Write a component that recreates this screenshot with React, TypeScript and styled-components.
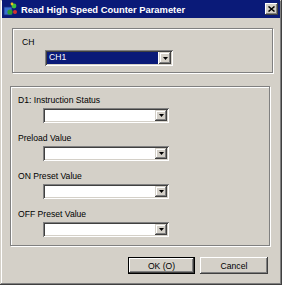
import React from 'react';
import styled, { createGlobalStyle } from 'styled-components';

const GlobalStyle = createGlobalStyle`
  html, body {
    margin: 0;
    padding: 0;
    background: #d4d0c8;
  }
  body {
    font-family: "Liberation Sans", Arial, sans-serif;
  }
`;

const Window = styled.div`
  width: 282px;
  height: 285px;
  box-sizing: border-box;
  padding: 0 2px 2px 2px;
  background: #d4d0c8;
  display: flex;
  flex-direction: column;
  box-shadow: inset -1px -1px 0 #404040, inset 1px 1px 0 #d4d0c8,
    inset -2px -2px 0 #808080, inset 2px 2px 0 #ffffff;
`;

const TitleBar = styled.div`
  height: 18px;
  background: #0a1a78;
  display: flex;
  align-items: center;
  padding: 0 2px 0 1px;
`;

const TitleText = styled.span`
  flex: 1;
  margin-left: 3px;
  color: #ffffff;
  font-weight: bold;
  font-size: 9.4px;
  white-space: nowrap;
`;

const CloseButton = styled.div`
  width: 13px;
  height: 12px;
  background: #d4d0c8;
  display: flex;
  align-items: center;
  justify-content: center;
  box-shadow: inset -1px -1px 0 #404040, inset 1px 1px 0 #ffffff,
    inset -2px -2px 0 #808080;
`;

interface GroupProps {
  $left: number;
  $top: number;
  $width: number;
  $height: number;
  $pad: number;
}

const Group = styled.div<GroupProps>`
  margin-left: ${(p) => p.$left}px;
  margin-top: ${(p) => p.$top}px;
  width: ${(p) => p.$width}px;
  height: ${(p) => p.$height}px;
  box-sizing: border-box;
  border: 1px solid #808080;
  box-shadow: inset 1px 1px 0 #ffffff, 1px 1px 0 #ffffff;
  display: flex;
  flex-direction: column;
  padding: 8px 0 0 ${(p) => p.$pad}px;
`;

const Label = styled.div`
  font-size: 8.6px;
  line-height: 10px;
  height: 10px;
  color: #000000;
  white-space: nowrap;
`;

const Field = styled.div<{ $indent: number }>`
  display: flex;
  flex-direction: column;
  gap: 3px;
  margin-bottom: 10px;

  & > :last-child {
    margin-left: ${(p) => p.$indent}px;
  }
`;

const ComboBox = styled.div<{ $width: number; $height: number }>`
  width: ${(p) => p.$width}px;
  height: ${(p) => p.$height}px;
  box-sizing: border-box;
  background: #ffffff;
  padding: 2px;
  display: flex;
  box-shadow: inset 1px 1px 0 #808080, inset -1px -1px 0 #ffffff,
    inset 2px 2px 0 #404040, inset -2px -2px 0 #d4d0c8;
`;

const ComboValue = styled.div<{ $selected: boolean }>`
  flex: 1;
  font-size: 8.6px;
  line-height: 11px;
  padding-left: 2px;
  margin-right: 1px;
  color: ${(p) => (p.$selected ? '#ffffff' : '#000000')};
  background: ${(p) => (p.$selected ? '#0a1a78' : 'transparent')};
`;

const DropButton = styled.div`
  width: 12px;
  background: #d4d0c8;
  display: flex;
  align-items: center;
  justify-content: center;
  box-shadow: inset -1px -1px 0 #404040, inset 1px 1px 0 #d4d0c8,
    inset -2px -2px 0 #808080, inset 2px 2px 0 #ffffff;
`;

const ButtonRow = styled.div`
  display: flex;
  gap: 5px;
  margin-top: 11px;
  margin-left: 126px;
`;

const PushButton = styled.div<{ $default?: boolean }>`
  width: ${(p) => (p.$default ? 67 : 68)}px;
  height: 17px;
  box-sizing: border-box;
  display: flex;
  align-items: center;
  justify-content: center;
  font-size: 8.6px;
  background: #d4d0c8;
  border: ${(p) => (p.$default ? '1px solid #000000' : 'none')};
  box-shadow: inset -1px -1px 0 #404040, inset 1px 1px 0 #ffffff,
    inset -2px -2px 0 #808080;
`;

const Arrow = () => (
  <svg width="5" height="3" viewBox="0 0 5 3">
    <path d="M0 0h5L2.5 3z" fill="#000" />
  </svg>
);

const AppIcon = () => (
  <svg width="15" height="15" viewBox="0 0 15 15">
    <rect x="1" y="5" width="8" height="8" fill="#3a6fd0" stroke="#1b2f7a" strokeWidth="0.8" />
    <circle cx="11" cy="4" r="2.4" fill="#3cbf3c" />
    <circle cx="7" cy="10" r="2.6" fill="#2e9e2e" />
    <circle cx="12" cy="10" r="2" fill="#d83030" />
    <circle cx="9" cy="2" r="1.4" fill="#e8c020" />
  </svg>
);

const Combo: React.FC<{ width: number; height: number; value?: string; selected?: boolean }> = ({
  width,
  height,
  value = '',
  selected = false,
}) => (
  <ComboBox $width={width} $height={height}>
    <ComboValue $selected={selected}>{value}</ComboValue>
    <DropButton>
      <Arrow />
    </DropButton>
  </ComboBox>
);

const fields = ['D1: Instruction Status', 'Preload Value', 'ON Preset Value', 'OFF Preset Value'];

export default function App() {
  return (
    <>
      <GlobalStyle />
      <Window>
        <TitleBar>
          <AppIcon />
          <TitleText>Read High Speed Counter Parameter</TitleText>
          <CloseButton>
            <svg width="7" height="6" viewBox="0 0 7 6">
              <path d="M0.5 0.5L6.5 5.5M6.5 0.5L0.5 5.5" stroke="#000" strokeWidth="1.5" />
            </svg>
          </CloseButton>
        </TitleBar>

        <Group $left={10} $top={10} $width={261} $height={45} $pad={9}>
          <Field $indent={23}>
            <Label>CH</Label>
            <Combo width={128} height={16} value="CH1" selected />
          </Field>
        </Group>

        <Group $left={8} $top={13} $width={260} $height={160} $pad={7}>
          {fields.map((f) => (
            <Field key={f} $indent={25}>
              <Label>{f}</Label>
              <Combo width={126} height={15} />
            </Field>
          ))}
        </Group>

        <ButtonRow>
          <PushButton $default>OK (O)</PushButton>
          <PushButton>Cancel</PushButton>
        </ButtonRow>
      </Window>
    </>
  );
}
